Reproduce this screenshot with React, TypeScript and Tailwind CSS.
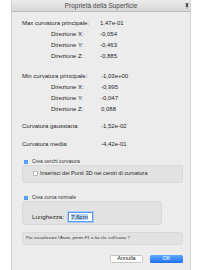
import React from 'react';

const font = { fontFamily: '"Liberation Sans", Arial, sans-serif' };

const Row: React.FC<{ label: string; value: string; indent?: boolean; w: string }> = ({ label, value, indent, w }) => (
  <div className="flex h-[11px] items-center text-[6px] text-[#262626]">
    <div className={`${w} ${indent ? 'pl-[29px]' : ''} shrink-0 whitespace-nowrap`}>{label}</div>
    <div className="whitespace-nowrap">{value}</div>
  </div>
);

const Check: React.FC<{ on?: boolean; size: string }> = ({ on, size }) =>
  on ? (
    <span className={`${size} shrink-0 rounded-[1px] bg-[#3d8ef5] flex items-center justify-center`}>
      <svg viewBox="0 0 10 10" className="w-full h-full">
        <path d="M2.5 5.2 L4.3 7 L7.6 3" fill="none" stroke="white" strokeWidth="1.6" />
      </svg>
    </span>
  ) : (
    <span className={`${size} shrink-0 rounded-[1px] bg-white border border-[#b5b5b5]`} />
  );

export default function App() {
  return (
    <div className="w-[201px] h-[270px] bg-white" style={font}>
      <div className="ml-[11px] w-[180px] h-[270px] bg-[#ececec] border-x border-[#d2d2d2] flex flex-col">
        <div className="relative h-[12px] shrink-0 bg-gradient-to-b from-[#ececec] to-[#d6d6d6] border-b border-[#bdbdbd] flex items-center justify-center">
          <span className="text-[6.5px] text-[#4a4a4a]">Proprietà della Superficie</span>
          <svg viewBox="0 0 6 8" className="absolute right-[1px] top-[3px] w-[4px] h-[6px]">
            <path d="M0.5 0 H5.5 V1 H4.6 V4 L5.6 5 H0.4 L1.4 4 V1 H0.5 Z" fill="#4d4d4d" />
            <rect x="2.6" y="5" width="0.8" height="3" fill="#4d4d4d" />
          </svg>
        </div>

        <div className="px-[10px] flex flex-col">
          <div className="pt-[5.5px]">
            <Row w="w-[78px]" label="Max curvatura principale:" value="1,47e-01" />
            <Row w="w-[78px]" indent label="Direzione X:" value="-0,054" />
            <Row w="w-[78px]" indent label="Direzione Y:" value="-0,463" />
            <Row w="w-[78px]" indent label="Direzione Z:" value="-0,885" />
          </div>
          <div className="mt-[9px]">
            <Row w="w-[79px]" label="Min curvatura principale:" value="-1,03e+00" />
            <Row w="w-[79px]" indent label="Direzione X:" value="-0,995" />
            <Row w="w-[79px]" indent label="Direzione Y:" value="-0,047" />
            <Row w="w-[79px]" indent label="Direzione Z:" value="0,088" />
          </div>
          <div className="mt-[6px]">
            <Row w="w-[79px]" label="Curvatura gaussiana:" value="-1,52e-02" />
          </div>
          <div className="mt-[7px]">
            <Row w="w-[79px]" label="Curvatura media:" value="-4,42e-01" />
          </div>

          <div className="mt-[10px] h-[5px] flex items-center gap-[4px] pl-[2px] text-[5px] text-[#333]">
            <Check on size="w-[4px] h-[4px]" />
            <span className="whitespace-nowrap">Crea cerchi curvatura</span>
          </div>
          <div className="h-[18px] w-[161px] rounded-[2px] bg-[#e2e2e2] border border-[#d9d9d9] flex items-center gap-[2px] pl-[10px] text-[5.6px] text-[#262626]">
            <Check size="w-[5px] h-[5px]" />
            <span className="whitespace-nowrap">Inserisci dei Punti 3D nei centri di curvatura</span>
          </div>

          <div className="mt-[13px] h-[5px] flex items-center gap-[4px] pl-[2px] text-[5px] text-[#333]">
            <Check on size="w-[4px] h-[4px]" />
            <span className="whitespace-nowrap">Crea curva normale</span>
          </div>
          <div className="h-[24px] w-[140px] rounded-[2px] bg-[#e2e2e2] border border-[#d9d9d9] flex items-start pt-[10px] pl-[9px] text-[6.2px] text-[#262626]">
            <span className="h-[10px] flex items-center whitespace-nowrap">Lunghezza:</span>
            <div className="ml-[4px] h-[10px] w-[25px] bg-white border border-[#5a9bf4] shadow-[0_0_0_1px_#a9c9f7] flex items-center pl-[2px]">
              <span className="bg-[#b4d5fe] leading-[6px]">7,6cm</span>
            </div>
          </div>

          <div className="mt-[7px] h-[13px] w-[161px] rounded-[2px] bg-[#e2e2e2] border border-[#d9d9d9] flex items-center pl-[3px] text-[4.4px] text-[#333]">
            <span className="whitespace-nowrap">Per visualizzare l'Aiuto, premi F1 o fai clic sull'icona ?</span>
          </div>

          <div className="mt-[10px] flex justify-end gap-[7px] pr-[-1px] w-[161px]">
            <div className="h-[8px] w-[33px] bg-white border border-[#c4c4c4] rounded-[1.5px] flex items-center justify-center text-[5.5px] text-[#222]">
              Annulla
            </div>
            <div className="h-[8px] w-[33px] bg-gradient-to-b from-[#5fa8fb] to-[#1e6ff4] rounded-[1.5px] flex items-center justify-center text-[5.5px] text-white">
              OK
            </div>
          </div>
        </div>
      </div>
    </div>
  );
}
